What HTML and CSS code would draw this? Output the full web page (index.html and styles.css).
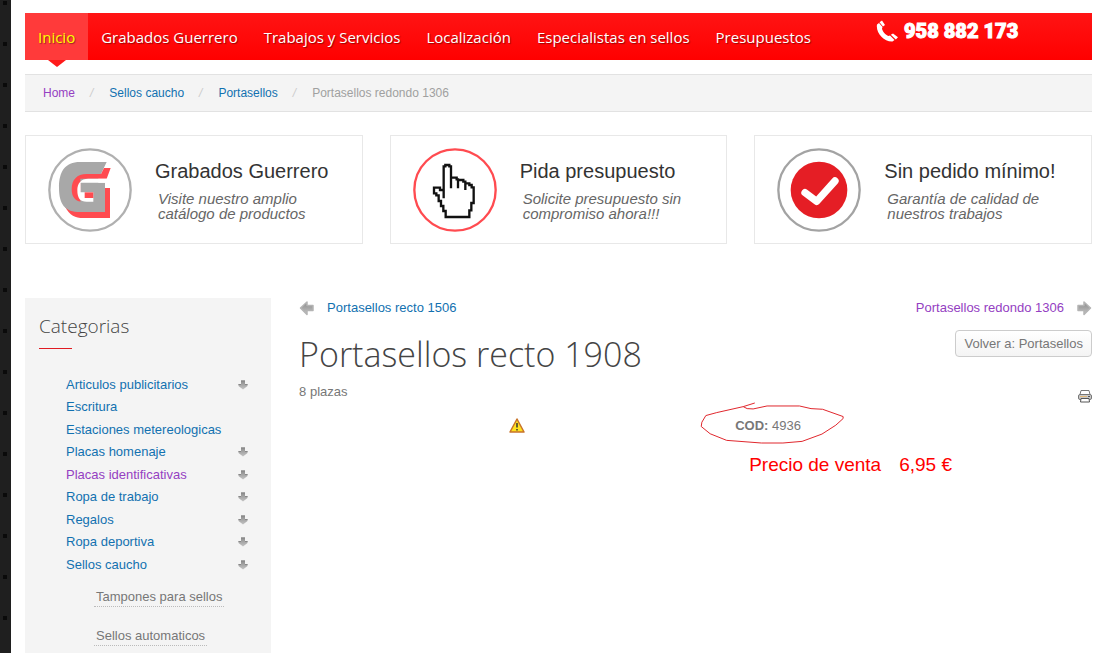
FILE: index.html
```
<!DOCTYPE html>
<html lang="es">
<head>
  <meta charset="UTF-8">
  <meta name="viewport" content="width=device-width, initial-scale=1.0">
  <title>Portasellos recto 1908</title>
  <link rel="stylesheet" href="styles.css">
</head>
<body>
  <!-- shared icons -->
  <svg class="sprite" aria-hidden="true">
    <defs>
      <linearGradient id="grey" x1="0" y1="0" x2="0" y2="1">
        <stop offset="0" stop-color="#8a8a8a"/>
        <stop offset="1" stop-color="#c4c4c4"/>
      </linearGradient>
      <symbol id="arrow-down" viewBox="0 0 10 10">
        <path d="M3 .5h4v3.500h2.500v2L5 9.500 .5 6V4H3z" fill="url(#grey)"/>
        <path d="M3 1h4M.5 4.500h2.500M7 4.500h2.500" stroke="#888" fill="none"/>
      </symbol>
      <symbol id="arrow-side" viewBox="0 0 16 16">
        <path d="M1.500 8L8 2v3.500h6v5H8V14.500z" fill="url(#grey)" stroke="#b4b4b4" stroke-width="1.500" stroke-linejoin="round"/>
      </symbol>
    </defs>
  </svg>

  <div class="wrapper">
    <header class="navbar">
      <nav>
        <a class="active" href="#">Inicio</a>
        <a href="#">Grabados Guerrero</a>
        <a href="#">Trabajos y Servicios</a>
        <a href="#">Localización</a>
        <a href="#">Especialistas en sellos</a>
        <a href="#">Presupuestos</a>
      </nav>
      <div class="phone">
        <svg width="22" height="22" viewBox="0 0 22 22" fill="#fff">
          <path d="M1 4.500C-.5 13 8 22 16.500 21.500L18.500 20 14 15.500 12.500 16C9.500 15 6.500 11.500 6 8.500L6.500 7 3 3z"/>
          <path d="M3.500 2.300L6 .5 9 5 7 6.600zM14.800 14.800L17 13.500 22 17.300 19.800 19.500z"/>
        </svg>
        <span>958 882 173</span>
      </div>
    </header>

    <nav class="breadcrumb">
      <a class="visited" href="#">Home</a><i>/</i>
      <a href="#">Sellos caucho</a><i>/</i>
      <a href="#">Portasellos</a><i>/</i>
      <span>Portasellos redondo 1306</span>
    </nav>

    <section class="features">
      <div class="feature">
        <svg viewBox="9 9 252 252">
          <circle cx="135" cy="135" r="122" fill="#fff" stroke="#b0b0b0" stroke-width="7"/>
          <path d="M60 185C75 212 90 219 115 219H195V129H170V195z" fill="#ff4b50"/>
          <path d="M185 51H105C60 51 42 80 42 128 42 178 60 201 105 201H180V113H160V87H168z" fill="#a8a8a8"/>
          <path d="M197 69H177L168 87H125C95 87 80 105 80 132 80 158 93 170 112 170H106V101H185z" fill="#ff4b50"/>
          <path d="M187 101H130C108 101 97 115 97 135 97 160 105 170 125 170H145V142H107V113H183z" fill="#fff"/>
          <path d="M119 142h26v17h-26z" fill="#ff4b50"/>
        </svg>
        <div>
          <h3>Grabados Guerrero</h3>
          <p>Visite nuestro amplio<br>catálogo de productos</p>
        </div>
      </div>
      <div class="feature">
        <svg viewBox="97 69 252 252">
          <circle cx="223" cy="195" r="122" fill="#fff" stroke="#ff4b50" stroke-width="7"/>
          <path d="M189 220V124H194V120H206V124H211V190M211 158H228V163H232V190M232 165H248V170H254V195M254 175H266V180H273V187H279V234H272V256H266V276H195V258H188V243H181V228H174V211H167V205H160V188H178V195H189" fill="none" stroke="#111" stroke-width="7"/>
        </svg>
        <div>
          <h3>Pida presupuesto</h3>
          <p>Solicite presupuesto sin<br>compromiso ahora!!!</p>
        </div>
      </div>
      <div class="feature">
        <svg viewBox="97 69 252 252">
          <circle cx="223" cy="195" r="122" fill="#fff" stroke="#a3a3a3" stroke-width="7"/>
          <circle cx="223" cy="195" r="85" fill="#e51e25"/>
          <path d="M181 203L216 229 271 168" fill="none" stroke="#fff" stroke-width="22" stroke-linecap="round" stroke-linejoin="round"/>
        </svg>
        <div>
          <h3>Sin pedido mínimo!</h3>
          <p>Garantía de calidad de<br>nuestros trabajos</p>
        </div>
      </div>
    </section>

    <div class="columns">
      <aside class="sidebar">
        <h2>Categorias</h2>
        <ul class="categories">
          <li><a href="#">Articulos publicitarios</a><svg><use href="#arrow-down"/></svg></li>
          <li><a href="#">Escritura</a></li>
          <li><a href="#">Estaciones metereologicas</a></li>
          <li><a href="#">Placas homenaje</a><svg><use href="#arrow-down"/></svg></li>
          <li><a class="visited" href="#">Placas identificativas</a><svg><use href="#arrow-down"/></svg></li>
          <li><a href="#">Ropa de trabajo</a><svg><use href="#arrow-down"/></svg></li>
          <li><a href="#">Regalos</a><svg><use href="#arrow-down"/></svg></li>
          <li><a href="#">Ropa deportiva</a><svg><use href="#arrow-down"/></svg></li>
          <li><a href="#">Sellos caucho</a><svg><use href="#arrow-down"/></svg></li>
        </ul>
        <ul class="subcategories">
          <li><a href="#">Tampones para sellos</a></li>
          <li><a href="#">Sellos automaticos</a></li>
        </ul>
      </aside>

      <main>
        <div class="pager">
          <a href="#"><svg><use href="#arrow-side"/></svg>Portasellos recto 1506</a>
          <a class="visited" href="#">Portasellos redondo 1306<svg class="flip"><use href="#arrow-side"/></svg></a>
        </div>
        <div class="heading">
          <h1>Portasellos recto 1908</h1>
          <button type="button">Volver a: Portasellos</button>
        </div>
        <p class="short">8 plazas</p>
        <div class="tools">
          <a href="#" aria-label="Imprimir">
            <svg width="14" height="13" viewBox="0 0 14 13">
              <path d="M3 .5h8l1 4H2z" fill="#fff" stroke="#777"/>
              <rect x=".5" y="4.500" width="13" height="5" rx="1.500" fill="#c9c9c9" stroke="#777"/>
              <path d="M2 6.500h7" stroke="#e3b878"/>
              <path d="M10 6.500h2" stroke="#555"/>
              <path d="M3 8.500h8l.5 3.500h-9z" fill="#fff" stroke="#555"/>
            </svg>
          </a>
        </div>
        <div class="product">
          <div class="picture">
            <svg width="16" height="15" viewBox="0 0 16 15">
              <path d="M8 1L15 14H1z" fill="#ffe11f" stroke="#c8732a" stroke-width="1.500" stroke-linejoin="round"/>
              <path d="M8 5v4.500M8 11v1.500" stroke="#333" stroke-width="1.500"/>
            </svg>
          </div>
          <div class="details">
            <div class="code">
              <b>COD:</b> 4936
              <svg class="scribble" viewBox="28 334 438 130">
                <path d="M195 337L160 348 172 354 190 355 232 346H330L365 354 400 356 462 378V384L440 404 398 431 338 453 280 458H215L110 450 60 430 33 408 35 395 47 375 80 366 160 348"/>
              </svg>
            </div>
            <div class="price"><span>Precio de venta</span><span>6,95 €</span></div>
          </div>
        </div>
      </main>
    </div>
  </div>
</body>
</html>
```
FILE: styles.css
```
* { margin: 0; padding: 0; box-sizing: border-box; }
body {
  font-family: "Liberation Sans", Arial, sans-serif;
  font-size: 13px;
  line-height: 22px;
  color: #777;
  padding-left: 11px;
  background-color: #1f1f1f;
  background-image: conic-gradient(from 90deg at calc(100% - 4px) calc(100% - 4px), #0a0a0a 90deg, transparent 0);
  background-size: 41px 41px;
  background-position: -34px 5px;
  overflow-x: hidden;
}
a { color: #1271b0; text-decoration: none; }
a:hover { text-decoration: underline; }
a.visited { color: #9440c2; }
ul { list-style: none; }
.sprite { position: absolute; width: 0; height: 0; }

.wrapper {
  min-height: 100vh;
  padding: 13px 8px 0 14px;
  background: #fff;
}

/* top bar */
.navbar {
  display: flex;
  background: linear-gradient(#ff1414, #f00);
}
.navbar nav { display: flex; }
.navbar nav a {
  position: relative;
  padding: 1px 13px 0;
  font-family: "Open Sans", sans-serif;
  font-size: 15px;
  line-height: 46px;
  color: #fff;
  white-space: nowrap;
  text-shadow: 1px 1px 1px rgba(0, 0, 0, 0.4);
}
.navbar nav a.active {
  color: #ff0;
  background: #ff3a3a;
}
.navbar nav a.active::after {
  content: "";
  position: absolute;
  top: 100%;
  left: 50%;
  margin-left: -9px;
  border: 9px solid transparent;
  border-top: 7px solid #ff1a1a;
  border-bottom: 0;
}
.phone {
  display: flex;
  align-items: flex-start;
  gap: 6px;
  margin-left: 52px;
  padding-top: 7px;
  color: #fff;
  font-family: "Roboto", sans-serif;
  font-size: 20px;
  font-weight: 900;
  line-height: 22px;
  white-space: nowrap;
  -webkit-text-stroke: 1px #fff;
}

.breadcrumb {
  display: flex;
  margin-top: 14px;
  padding: 0 18px;
  border-top: 1px solid #e2e2e2;
  border-bottom: 1px solid #e2e2e2;
  background: #f4f4f4;
  font-size: 12px;
  line-height: 36px;
}
.breadcrumb i { margin: 0 16px 0 15px; color: #ccc; }
.breadcrumb span { color: #a0a0a0; }

/* three boxes */
.features {
  display: grid;
  grid-template-columns: repeat(3, 1fr);
  gap: 27px;
  margin-top: 23px;
}
.feature {
  display: flex;
  gap: 23px;
  padding: 12px 22px 11px;
  border: 1px solid #e8e8e8;
}
.feature svg { flex: none; width: 84px; height: 84px; }
.feature h3 {
  margin-top: 11px;
  font-size: 20px;
  font-weight: normal;
  line-height: 24px;
  color: #333;
  white-space: nowrap;
}
.feature p {
  margin: 8px 0 0 3px;
  font-size: 15px;
  font-style: italic;
  line-height: 15px;
  color: #666;
  white-space: nowrap;
}

.columns {
  display: grid;
  grid-template-columns: 3fr 9.667fr;
  gap: 28px;
  margin-top: 54px;
}

/* sidebar */
.sidebar {
  padding: 14px 14px 0;
  background: #f4f4f4;
}
.sidebar h2 {
  font-family: "Open Sans", sans-serif;
  font-size: 19px;
  font-weight: 300;
  line-height: 28px;
  color: #444;
}
.sidebar h2::after {
  content: "";
  display: block;
  width: 33px;
  margin-top: 8px;
  border-top: 1px solid #e01b22;
}
.categories { margin: 25px 9px 0 27px; }
.categories li {
  display: flex;
  align-items: center;
  justify-content: space-between;
  white-space: nowrap;
}
.categories li:nth-child(even) { padding-bottom: 1px; }
.categories svg { width: 10px; height: 10px; }
.subcategories { margin: 10px 0 0 55px; }
.subcategories li { height: 39px; }
.subcategories a {
  display: inline-block;
  padding: 0 2px;
  border-bottom: 1px dotted #bbb;
  line-height: 18px;
  color: #777;
  white-space: nowrap;
}

/* product */
.pager {
  display: flex;
  justify-content: space-between;
  line-height: 20px;
}
.pager a { display: flex; align-items: center; gap: 12px; }
.pager svg { width: 16px; height: 16px; }
.pager .flip { transform: scaleX(-1); }
.heading {
  display: flex;
  align-items: flex-start;
  justify-content: space-between;
  margin-top: 12px;
}
h1 {
  margin-top: 2px;
  font-family: "Open Sans", sans-serif;
  font-size: 34px;
  font-weight: 300;
  line-height: 44px;
  color: #444;
}
button {
  height: 27px;
  padding: 0 8px;
  border: 1px solid #ccc;
  border-radius: 4px;
  background: linear-gradient(#fff, #f4f4f4);
  font-family: inherit;
  font-size: 13px;
  color: #777;
  cursor: pointer;
}
.short { margin-top: 5px; }
.tools { display: flex; justify-content: flex-end; height: 13px; margin-top: -13px; }
.tools svg { display: block; }
.product {
  display: grid;
  grid-template-columns: 55% 45%;
  margin-top: 12px;
}
.picture { padding-top: 3px; text-align: center; }
.code { position: relative; width: max-content; }
.scribble {
  position: absolute;
  top: -13px;
  left: -36px;
  width: 146px;
  height: 43px;
  fill: none;
  stroke: #e0252b;
  stroke-width: 3;
}
.price {
  display: flex;
  gap: 18px;
  margin: 17px 0 0 14px;
  font-size: 19px;
  color: #f00;
}
```
